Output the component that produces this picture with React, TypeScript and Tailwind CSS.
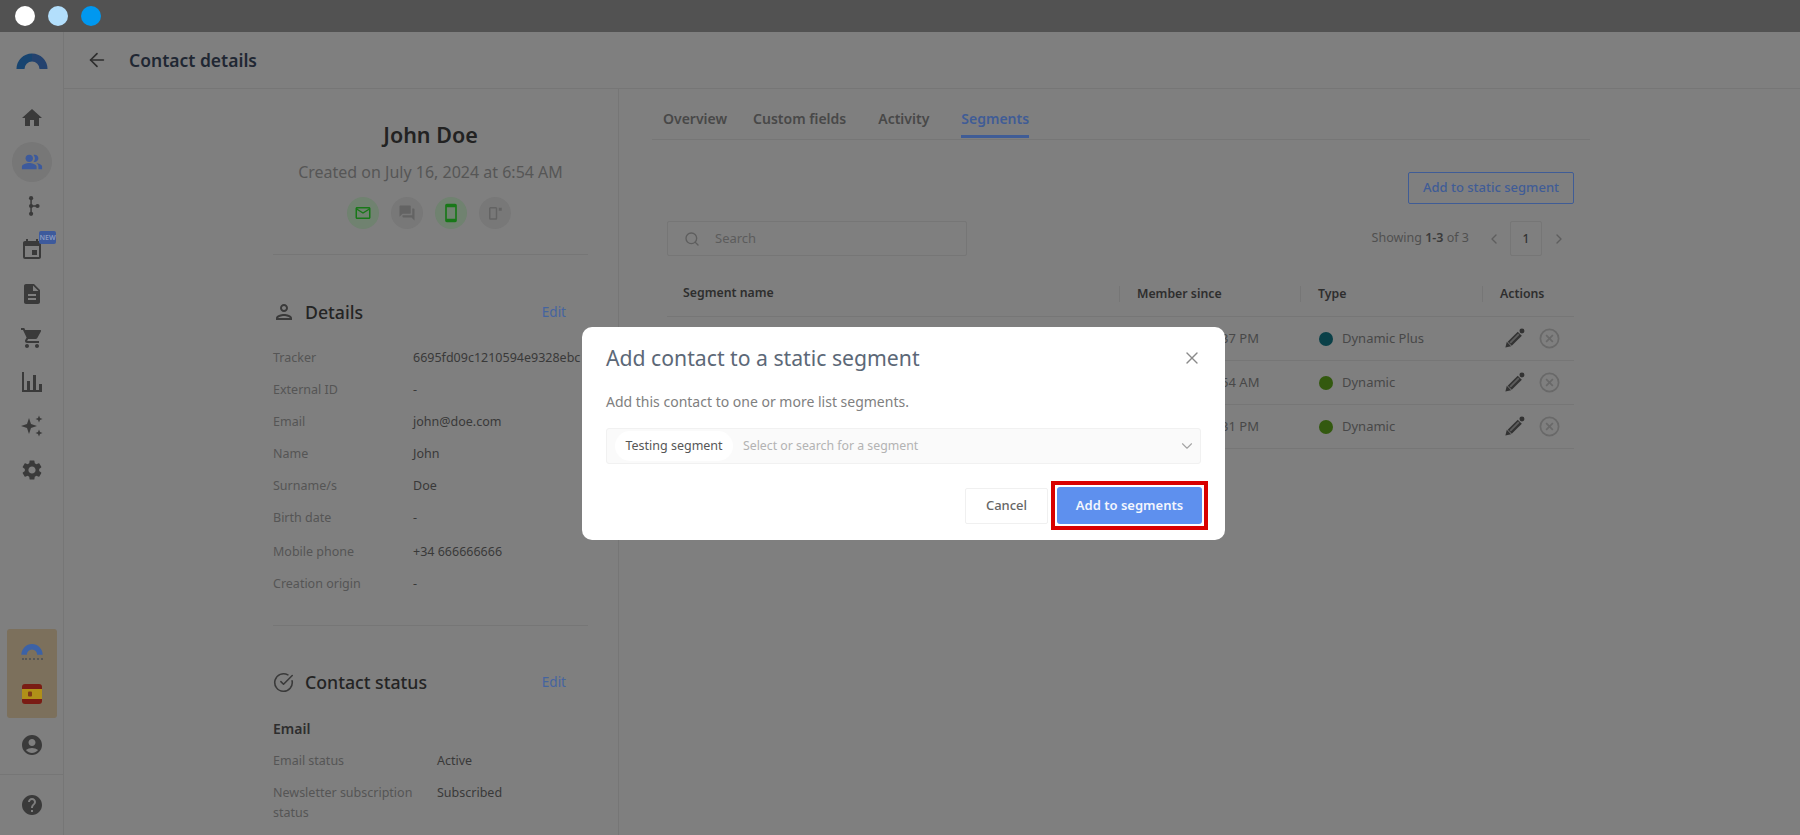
import { ArrowLeft, ChevronDown, ChevronLeft, ChevronRight, CircleCheckBig, Search, X } from 'lucide-react';
import {
  MdAccountCircle,
  MdDescription,
  MdEvent,
  MdForum,
  MdHelp,
  MdHome,
  MdOutlineEmail,
  MdOutlinePerson,
  MdPeopleAlt,
  MdSettings,
  MdShoppingCart,
  MdSmartphone,
} from 'react-icons/md';

const details = [
  { label: 'Tracker', value: '6695fd09c1210594e9328ebc' },
  { label: 'External ID', value: '-' },
  { label: 'Email', value: 'john@doe.com' },
  { label: 'Name', value: 'John' },
  { label: 'Surname/s', value: 'Doe' },
  { label: 'Birth date', value: '-', tall: true },
  { label: 'Mobile phone', value: '+34 666666666' },
  { label: 'Creation origin', value: '-' },
];

const rows = [
  { since: 'Jul 16, 2024 6:37 PM', type: 'Dynamic Plus', dot: 'bg-[#0a4048]' },
  { since: 'Jul 16, 2024 6:54 AM', type: 'Dynamic', dot: 'bg-[#33590f]' },
  { since: 'Jul 16, 2024 6:31 PM', type: 'Dynamic', dot: 'bg-[#33590f]' },
];

function ArchLogo({ small }: { small?: boolean }) {
  return (
    <svg viewBox="0 0 32 18" className={small ? 'w-[22px] h-[13px]' : 'w-[32px] h-[18px]'} aria-hidden="true">
      <path d="M4.500 18a11.500 11.500 0 0 1 11.500-11.500" fill="none" stroke={small ? '#3c62a6' : '#174470'} strokeWidth="8" />
      <path d="M16 6.500a11.500 11.500 0 0 1 11.500 11.500" fill="none" stroke={small ? '#3c62a6' : '#24426e'} strokeWidth="8" />
    </svg>
  );
}

function JourneyIcon() {
  return (
    <svg viewBox="0 0 24 24" className="w-[22px] h-[22px]" fill="#3a3a3a" aria-hidden="true">
      <rect x="10.200" y="3" width="1.600" height="18" />
      <rect x="11" y="11.200" width="8" height="1.600" />
      <circle cx="11" cy="3.500" r="2.300" />
      <circle cx="11" cy="12" r="2.300" />
      <circle cx="11" cy="20.500" r="2.300" />
      <circle cx="18" cy="12" r="2.300" />
    </svg>
  );
}

function SparkleIcon() {
  return (
    <svg viewBox="0 0 24 24" className="w-6 h-6" fill="#3a3a3a" aria-hidden="true">
      <path d="M9 4l2 6 6 2-6 2-2 6-2-6-6-2 6-2z" />
      <path d="M19 1.500l1 2.500 2.500 1-2.500 1-1 2.500-1-2.500-2.500-1 2.500-1z" />
      <path d="M19 15.500l1 2.500 2.500 1-2.500 1-1 2.500-1-2.500-2.500-1 2.500-1z" />
    </svg>
  );
}

function BarsIcon() {
  return (
    <svg viewBox="0 0 24 24" className="w-6 h-6" fill="#3a3a3a" aria-hidden="true">
      <rect x="2" y="2" width="2" height="20" />
      <rect x="2" y="20" width="20" height="2" />
      <rect x="7" y="11" width="3" height="9" />
      <rect x="13" y="5" width="3" height="15" />
      <rect x="19" y="14" width="3" height="6" />
    </svg>
  );
}

function SpainFlag() {
  return (
    <svg viewBox="0 0 20 20" className="w-5 h-5" aria-hidden="true">
      <rect width="20" height="20" rx="3" fill="#7a1c14" />
      <rect y="5" width="20" height="10" fill="#b09018" />
      <rect x="6" y="7.500" width="4" height="5" rx="1" fill="#7f3a18" />
    </svg>
  );
}

function OptInIcon() {
  return (
    <svg viewBox="0 0 24 24" className="w-[18px] h-[18px]" fill="none" stroke="#636363" aria-hidden="true">
      <rect x="5" y="5" width="9" height="15" rx="1" strokeWidth="2" />
      <rect x="17" y="5" width="4" height="4" fill="#636363" stroke="none" />
    </svg>
  );
}

function PencilIcon() {
  return (
    <svg viewBox="0 0 24 24" className="w-[23px] h-[23px]" fill="none" aria-hidden="true">
      <path d="M7 17.500L17.500 7" stroke="#333333" strokeWidth="6" />
      <path d="M7.500 16.500L16.500 7.500" stroke="#5c5c5c" strokeWidth="2" />
      <path d="M2.500 21.500l1.500-6 4.500 4.500z" fill="#333333" />
      <circle cx="19.800" cy="4.200" r="2.600" fill="#333333" />
    </svg>
  );
}

function RemoveIcon() {
  return (
    <svg viewBox="0 0 24 24" className="w-[23px] h-[23px]" fill="none" stroke="#696969" aria-hidden="true">
      <circle cx="12" cy="12" r="9.500" strokeWidth="1.800" />
      <path d="M8.500 8.500l7 7M15.500 8.500l-7 7" strokeWidth="1.800" />
    </svg>
  );
}

function NavItem({ children }: { children: React.ReactNode }) {
  return <div className="h-11 flex items-center justify-center relative">{children}</div>;
}

function Sidebar() {
  return (
    <aside className="w-16 shrink-0 border-r border-[#767676] flex flex-col">
      <div className="h-14 flex items-center justify-center">
        <ArchLogo />
      </div>
      <nav className="mt-2 flex flex-col text-[#3a3a3a] text-2xl">
        <NavItem>
          <MdHome />
        </NavItem>
        <NavItem>
          <span className="w-10 h-10 rounded-full bg-[#777777] flex items-center justify-center text-[22px] text-[#3d5a9c]">
            <MdPeopleAlt />
          </span>
        </NavItem>
        <NavItem>
          <JourneyIcon />
        </NavItem>
        <NavItem>
          <MdEvent />
          <span className="absolute left-[39px] top-[3px] w-[17px] h-[13px] rounded-[2px] bg-[#3d5a9c] text-[7px] leading-[13px] font-semibold text-center text-[#8c9cc0]">
            NEW
          </span>
        </NavItem>
        <NavItem>
          <MdDescription />
        </NavItem>
        <NavItem>
          <MdShoppingCart />
        </NavItem>
        <NavItem>
          <BarsIcon />
        </NavItem>
        <NavItem>
          <SparkleIcon />
        </NavItem>
        <NavItem>
          <MdSettings />
        </NavItem>
      </nav>
      <div className="mt-auto mb-[1px] ml-[7px] w-[50px] h-[89px] rounded-[3px] bg-[#7c705c] flex flex-col items-center">
        <div className="mt-[13px] flex flex-col items-center">
          <ArchLogo small />
          <span className="mt-[3px] w-[21px] border-t-2 border-dotted border-[#565656]" />
        </div>
        <div className="mt-[24px]">
          <SpainFlag />
        </div>
      </div>
      <div className="h-[56px] pb-[4px] flex items-center justify-center text-2xl text-[#3a3a3a] border-b border-[#767676]">
        <MdAccountCircle />
      </div>
      <div className="h-[60px] flex items-center justify-center text-2xl text-[#3a3a3a]">
        <MdHelp />
      </div>
    </aside>
  );
}

function SectionHeading({ icon, title }: { icon: React.ReactNode; title: string }) {
  return (
    <div className="h-6 flex items-center">
      <span className="w-[32px] flex items-center text-[#3a3a3a]">{icon}</span>
      <h2 className="text-[17.700px] font-medium text-[#242424] flex-1">{title}</h2>
      <span className="mr-[22px] text-[13.500px] text-[#45649f]">Edit</span>
    </div>
  );
}

function ContactPanel() {
  return (
    <section className="w-[555px] shrink-0 border-r border-[#767676] pl-[209px] pr-[30px] overflow-hidden">
      <h1 className="mt-8 text-[21.500px] leading-7 font-semibold text-center text-[#222222]">John Doe</h1>
      <p className="mt-[11px] text-[16px] leading-6 text-center text-[#565656]">Created on July 16, 2024 at 6:54 AM</p>
      <div className="mt-[13px] pr-[3px] flex justify-center gap-3">
        <span className="w-8 h-8 rounded-full bg-[#708270] flex items-center justify-center text-[18px] text-[#187818]">
          <MdOutlineEmail />
        </span>
        <span className="w-8 h-8 rounded-full bg-[#787878] flex items-center justify-center text-[18px] text-[#636363]">
          <MdForum />
        </span>
        <span className="w-8 h-8 rounded-full bg-[#708270] flex items-center justify-center text-[20px] text-[#187818]">
          <MdSmartphone />
        </span>
        <span className="w-8 h-8 rounded-full bg-[#787878] flex items-center justify-center">
          <OptInIcon />
        </span>
      </div>
      <div className="mt-[25px] border-t border-[#767676]" />

      <div className="mt-[45px]">
        <SectionHeading icon={<MdOutlinePerson className="text-[24px] -ml-[1px]" />} title="Details" />
      </div>
      <dl className="mt-[18px] text-[12.500px]">
        {details.map((row) => (
          <div key={row.label} className={`flex leading-8 ${row.tall ? 'h-[34px]' : 'h-8'}`}>
            <dt className="w-[140px] shrink-0 text-[#555555]">{row.label}</dt>
            <dd className="text-[#393939] whitespace-nowrap">{row.value}</dd>
          </div>
        ))}
      </dl>
      <div className="mt-[25px] border-t border-[#767676]" />

      <div className="mt-[44px]">
        <SectionHeading icon={<CircleCheckBig size={21} strokeWidth={1.8} />} title="Contact status" />
      </div>
      <h3 className="mt-6 text-[14px] leading-[22px] font-semibold text-[#2e2e2e]">Email</h3>
      <dl className="mt-[5px] text-[12.500px]">
        <div className="flex leading-8">
          <dt className="w-[164px] shrink-0 text-[#555555]">Email status</dt>
          <dd className="text-[#393939]">Active</dd>
        </div>
        <div className="flex">
          <dt className="w-[164px] shrink-0 pr-4 pt-[6px] leading-[20px] text-[#555555]">Newsletter subscription status</dt>
          <dd className="text-[#393939] leading-8">Subscribed</dd>
        </div>
      </dl>
    </section>
  );
}

function SegmentsPanel() {
  const head = 'h-4 leading-4 mb-[2px] pl-[17px] border-l border-[#767676] text-[12.300px] font-semibold text-[#2e2e2e]';
  return (
    <section className="flex-1 pl-[33px] pr-[210px]">
      <div className="h-[51px] border-b border-[#767676] pl-[11px] flex gap-[26px] text-[14px] font-semibold text-[#484848]">
        <span className="mt-[19px]">Overview</span>
        <span className="mt-[19px]">Custom fields</span>
        <span className="mt-[19px] ml-[6px]">Activity</span>
        <span className="ml-[6px] h-[49px] pt-[19px] border-b-[3px] border-[#3f5c96] text-[#3f5c96]">Segments</span>
      </div>
      <div className="pl-[15px] pr-[16px]">
        <div className="mt-[32px] flex justify-end">
          <button className="w-[166px] h-8 rounded-[2px] border border-[#3f5c96] text-[13px] font-medium text-[#3f5c96]">
            Add to static segment
          </button>
        </div>
        <div className="mt-[17px] flex items-center">
          <div className="w-[300px] h-[35px] rounded-[2px] border border-[#767676] flex items-center pl-4 text-[13px] text-[#5c5c5c]">
            <Search size={16} className="text-[#5e5e5e]" />
            <span className="ml-[15px]">Search</span>
          </div>
          <div className="ml-auto flex items-center">
            <span className="text-[12.500px] text-[#505050]">
              Showing <b className="font-semibold text-[#3a3a3a]">1-3</b> of 3
            </span>
            <ChevronLeft size={16} className="ml-[17px] text-[#5e5e5e]" />
            <span className="ml-[8px] w-[32px] h-[35px] rounded-[2px] border border-[#767676] flex items-center justify-center text-[12px] font-medium text-[#333333]">
              1
            </span>
            <ChevronRight size={16} className="ml-[9px] mr-[7px] text-[#5e5e5e]" />
          </div>
        </div>
        <div className="mt-[17px] grid grid-cols-[452px_181px_182px_91px] h-[44px] items-center border-b border-[#767676]">
          <div className="mb-[2px] pl-4 text-[12.300px] font-semibold text-[#2e2e2e]">Segment name</div>
          <div className={head}>Member since</div>
          <div className={head}>Type</div>
          <div className={head}>Actions</div>
        </div>
        {rows.map((row, i) => (
          <div
            key={i}
            className="grid grid-cols-[452px_181px_182px_91px] h-[44px] items-center border-b border-[#767676] text-[13px] text-[#484848]"
          >
            <div />
            <div className="pl-[18px] whitespace-nowrap">{row.since}</div>
            <div className="pl-[19px] flex items-center">
              <span className={`w-[14px] h-[14px] rounded-full ${row.dot}`} />
              <span className="ml-[9px]">{row.type}</span>
            </div>
            <div className="pl-[21px] flex items-center">
              <PencilIcon />
              <span className="ml-[12px]">
                <RemoveIcon />
              </span>
            </div>
          </div>
        ))}
      </div>
    </section>
  );
}

function Modal() {
  return (
    <div className="absolute inset-x-0 top-8 bottom-0 pl-[7px] flex items-center justify-center">
      <div className="w-[643px] h-[213px] rounded-[10px] bg-white px-6 pt-[17px]">
        <div className="flex items-center">
          <h2 className="flex-1 text-[21.200px] leading-7 text-[#5c6877]">Add contact to a static segment</h2>
          <X size={20} strokeWidth={1.6} className="mr-[-1px] text-[#8a8a8a]" />
        </div>
        <p className="mt-[19px] text-[14px] leading-[22px] text-[#808080]">Add this contact to one or more list segments.</p>
        <div className="mt-[15px] h-[36px] rounded-[3px] border border-[#f1f1f1] bg-[#fafafa] flex items-center pl-2 pr-[4px]">
          <span className="h-[30px] w-[118px] rounded-full bg-white flex items-center justify-center pt-[1px] text-[12.500px] text-[#565656]">
            Testing segment
          </span>
          <span className="ml-[10px] pt-[1px] text-[12.300px] text-[#b3b3b3]">Select or search for a segment</span>
          <ChevronDown size={18} strokeWidth={1.5} className="ml-auto text-[#a5a5a5]" />
        </div>
        <div className="mt-[17px] flex justify-end items-center mr-[-7px]">
          <button className="w-[83px] h-[36px] rounded-[2px] border border-[#f0f0f0] pt-[1px] text-[13px] font-medium text-[#666666]">
            Cancel
          </button>
          <div className="ml-[3px] border-[4px] border-[#d90000] p-[2px]">
            <button className="block w-[145px] h-[37px] rounded-[3px] bg-[#5e90ee] pt-[1px] text-[13px] font-semibold text-[#f3f6fd]">
              Add to segments
            </button>
          </div>
        </div>
      </div>
    </div>
  );
}

export default function App() {
  return (
    <div className="relative w-[1800px] h-[835px] overflow-hidden bg-[#7f7f7f] font-['Noto_Sans','Liberation_Sans',sans-serif]">
      <div className="h-8 bg-[#525252] flex items-center gap-[13px] pl-[15px]">
        <span className="w-5 h-5 rounded-full bg-white" />
        <span className="w-5 h-5 rounded-full bg-[#b3dffc]" />
        <span className="w-5 h-5 rounded-full bg-[#0098f0]" />
      </div>
      <div className="flex h-[803px]">
        <Sidebar />
        <div className="flex-1 flex flex-col min-w-0">
          <header className="h-[57px] shrink-0 border-b border-[#767676] flex items-center pl-[22px]">
            <ArrowLeft size={22} strokeWidth={1.8} className="text-[#2e2e2e]" />
            <h1 className="ml-[21px] text-[17.500px] font-semibold text-[#1f2733]">Contact details</h1>
          </header>
          <div className="flex-1 flex min-h-0">
            <ContactPanel />
            <SegmentsPanel />
          </div>
        </div>
      </div>
      <Modal />
    </div>
  );
}
